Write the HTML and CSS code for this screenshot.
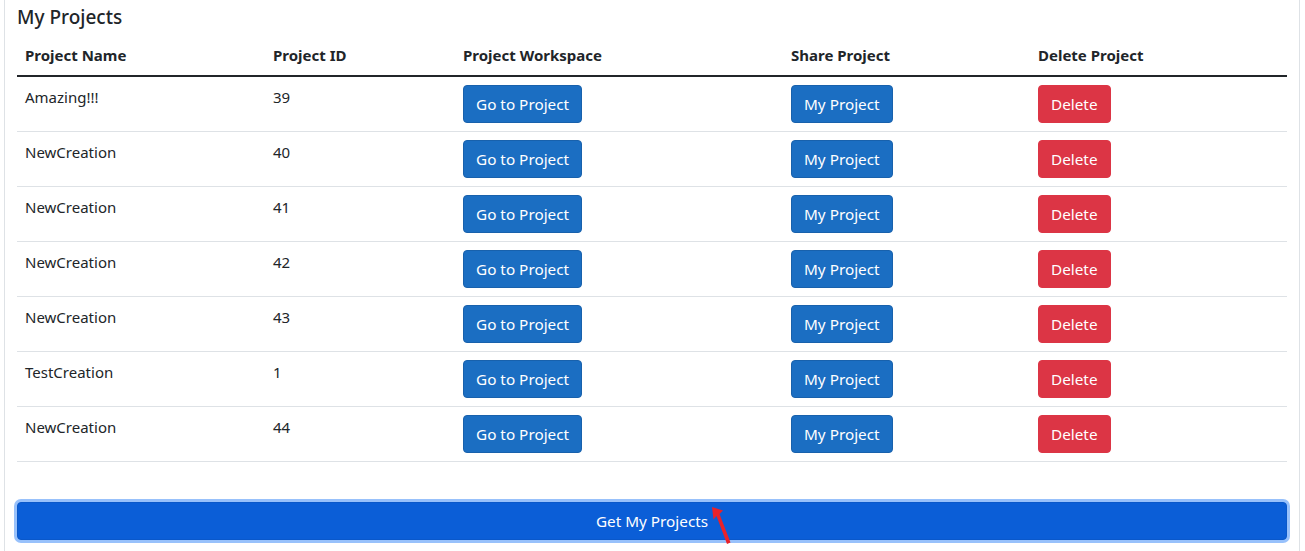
FILE: index.html
```html
<!DOCTYPE html>
<html>
<head>
<meta charset="utf-8">
<link rel="stylesheet" href="styles.css">
</head>
<body>
<div class="page">
  <div class="card">
    <h5 class="title">My Projects</h5>
    <table class="projects">
      <colgroup>
        <col class="c-name"><col class="c-id"><col class="c-ws"><col class="c-share"><col class="c-del">
      </colgroup>
      <thead>
        <tr><th>Project Name</th><th>Project ID</th><th>Project Workspace</th><th>Share Project</th><th>Delete Project</th></tr>
      </thead>
      <tbody>
        <tr><td>Amazing!!!</td><td>39</td><td><button class="btn btn-primary">Go to Project</button></td><td><button class="btn btn-primary">My Project</button></td><td><button class="btn btn-danger">Delete</button></td></tr>
        <tr><td>NewCreation</td><td>40</td><td><button class="btn btn-primary">Go to Project</button></td><td><button class="btn btn-primary">My Project</button></td><td><button class="btn btn-danger">Delete</button></td></tr>
        <tr><td>NewCreation</td><td>41</td><td><button class="btn btn-primary">Go to Project</button></td><td><button class="btn btn-primary">My Project</button></td><td><button class="btn btn-danger">Delete</button></td></tr>
        <tr><td>NewCreation</td><td>42</td><td><button class="btn btn-primary">Go to Project</button></td><td><button class="btn btn-primary">My Project</button></td><td><button class="btn btn-danger">Delete</button></td></tr>
        <tr><td>NewCreation</td><td>43</td><td><button class="btn btn-primary">Go to Project</button></td><td><button class="btn btn-primary">My Project</button></td><td><button class="btn btn-danger">Delete</button></td></tr>
        <tr><td>TestCreation</td><td>1</td><td><button class="btn btn-primary">Go to Project</button></td><td><button class="btn btn-primary">My Project</button></td><td><button class="btn btn-danger">Delete</button></td></tr>
        <tr><td>NewCreation</td><td>44</td><td><button class="btn btn-primary">Go to Project</button></td><td><button class="btn btn-primary">My Project</button></td><td><button class="btn btn-danger">Delete</button></td></tr>
      </tbody>
    </table>
    <div class="action">
      <button class="btn btn-get">Get My Projects</button>
      <svg class="cursor" width="22" height="40" viewBox="0 0 22 40">
        <path d="M1 1 L12 4.5 L8.5 8 L19.5 36.5 L16 38 L5.5 10 L2.5 13.5 Z" fill="#e8222a"/>
      </svg>
    </div>
  </div>
</div>
</body>
</html>
```
FILE: styles.css
```css
html, body {
  margin: 0;
  padding: 0;
  background: #fff;
}
body {
  font-family: "Noto Sans", "Open Sans", sans-serif;
  font-size: 15px;
  line-height: 24px;
  color: #212529;
}
.page {
  padding: 0 5px 0 4px;
}
.card {
  border-left: 1px solid #dee2e6;
  border-right: 1px solid #dee2e6;
  padding: 5px 12px 10px 12px;
  height: 536px;
}
.title {
  margin: 0 0 6px 0;
  font-size: 19px;
  font-weight: 500;
  line-height: 24px;
}
.projects {
  width: 100%;
  border-collapse: collapse;
  table-layout: fixed;
}
.c-name { width: 248px; }
.c-id { width: 190px; }
.c-ws { width: 328px; }
.c-share { width: 247px; }
.c-del { width: 257px; }
.projects th {
  text-align: left;
  font-weight: 700;
  padding: 8px;
  border-bottom: 2px solid #212529;
}
.projects td {
  padding: 8px;
  vertical-align: top;
  border-bottom: 1px solid #dee2e6;
  height: 38px;
}
.btn {
  font-family: inherit;
  font-size: 15.3px;
  line-height: 24px;
  padding: 6px 12px;
  border-radius: 4px;
  border: 1px solid transparent;
  color: #fff;
  cursor: pointer;
  display: inline-block;
}
.btn-primary {
  background: #1b6ec2;
  border-color: #1861ac;
}
.btn-danger {
  background: #dc3545;
  border-color: #dc3545;
}
.action {
  position: relative;
  margin-top: 40px;
}
.btn-get {
  width: 100%;
  background: #0b5ed7;
  border-color: #0a58ca;
  box-shadow: 0 0 0 3px #98c1fb;
}
.cursor {
  position: absolute;
  left: 694px;
  top: 4px;
}
```
